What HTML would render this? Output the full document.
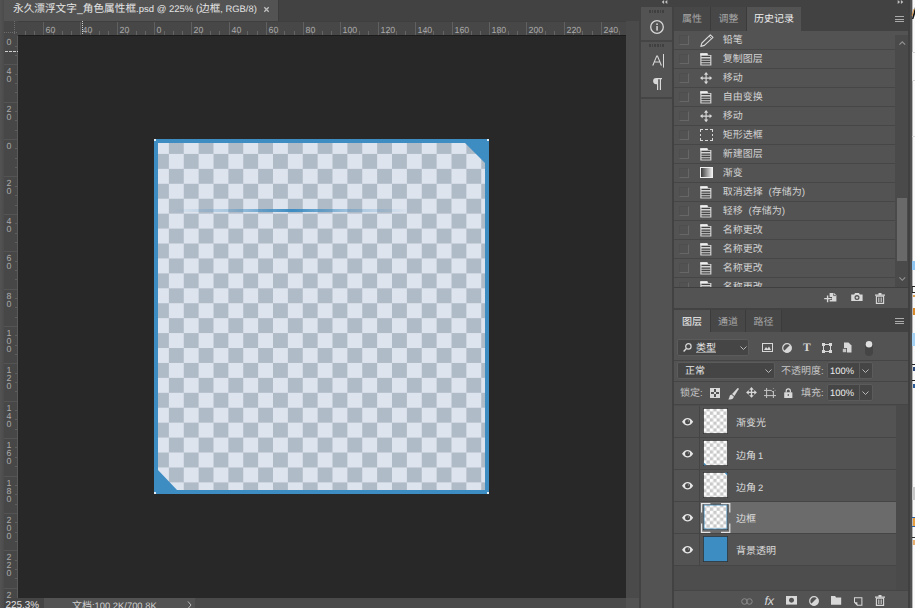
<!DOCTYPE html><html lang="zh-CN"><head><meta charset="utf-8"><title>Photoshop</title><style>
*{box-sizing:border-box;margin:0;padding:0}
html,body{width:915px;height:608px;overflow:hidden;background:#424242}
body{position:relative;text-rendering:geometricPrecision;font-family:"Liberation Sans",sans-serif;font-size:10px;color:#d6d6d6;line-height:1}
.a{position:absolute}
.t{position:absolute;white-space:nowrap;line-height:12px;height:12px;font-size:10px}
.l{font-size:9.4px}
.c{display:inline-block;white-space:nowrap;vertical-align:baseline}
svg{position:absolute;overflow:visible}
.row{position:absolute;left:674px;width:221px;height:19px;border-bottom:1px solid #464646}
.cb{position:absolute;left:5px;top:4px;width:10px;height:10px;background:#525252;border:1px solid #676767;border-top-color:#4e4e4e;border-left-color:#4e4e4e}
  .row .t{left:48.7px;top:4px;color:#d2d2d2}
.lyr{position:absolute;left:674px;width:222px;height:32px;border-bottom:1px solid #454545}
.lyr .eyec{position:absolute;left:0;top:0;width:26px;height:31px;border-right:1px solid #454545;background:#535353}
.lyr .t{left:62px;top:11.5px;color:#dcdcdc}
.th{position:absolute;left:29px;top:3px;width:24px;height:26px;border:1px solid #fff;box-shadow:0 0 0 1px rgba(40,40,40,.4);
 background:repeating-conic-gradient(#ccc 0 25%,#fff 0 50%) 0 0/7px 7px}
.dd{position:absolute;background:#454545;border:1px solid #5b5b5b;border-radius:2px}
.tab{position:absolute;text-align:center;font-size:10px;line-height:12px;color:#a6a6a6;background:#474747;border-right:1px solid #3b3b3b}
.tab.on{background:#535353;color:#f0f0f0;border-right:none}
</style></head><body>
<div class="a" style="left:0;top:0;width:640px;height:21px;background:#424242"></div>
<div class="a" style="left:0;top:0;width:279px;height:21px;background:#535353;border-right:1px solid #3c3c3c"></div>
<div class="a" style="left:0;top:0;width:4px;height:608px;background:linear-gradient(90deg,#535353,#4b4b4b)"></div>
<div class="t" style="left:13px;top:3px;font-size:10.65px;color:#e4e4e4"><span class="c" style="width:63.9px">永久漂浮文字</span>_<span class="c" style="width:53.25px">角色属性框</span><span class="l" style="font-size:9.5px">.psd @ 225% (</span><span class="c" style="width:21.3px">边框</span><span class="l" style="font-size:9.4px">, RGB/8)</span></div>
<svg style="left:264px;top:7px" width="5" height="5" viewBox="0 0 5 5"><path d="M0.3 0.3L4.7 4.7M4.7 0.3L0.3 4.7" stroke="#c0c0c0" stroke-width="1.3"/></svg>
<div class="a" style="left:4px;top:21px;width:622px;height:15px;background:#474747;border-bottom:1px solid #1c1c1c"></div>
<div class="a" style="left:4px;top:36px;width:14px;height:562px;background:#474747;border-right:1px solid #5a5a5a"></div>
<svg style="left:0;top:0" width="915" height="608" shape-rendering="crispEdges"><rect x="25" y="31" width="1" height="4" fill="#646464"/><rect x="34" y="31" width="1" height="4" fill="#646464"/><rect x="43" y="21" width="1" height="14" fill="#606060"/><rect x="53" y="31" width="1" height="4" fill="#646464"/><rect x="62" y="31" width="1" height="4" fill="#646464"/><rect x="71" y="31" width="1" height="4" fill="#646464"/><rect x="80" y="21" width="1" height="14" fill="#606060"/><rect x="90" y="31" width="1" height="4" fill="#646464"/><rect x="99" y="31" width="1" height="4" fill="#646464"/><rect x="108" y="31" width="1" height="4" fill="#646464"/><rect x="117" y="21" width="1" height="14" fill="#606060"/><rect x="127" y="31" width="1" height="4" fill="#646464"/><rect x="136" y="31" width="1" height="4" fill="#646464"/><rect x="145" y="31" width="1" height="4" fill="#646464"/><rect x="154" y="21" width="1" height="14" fill="#606060"/><rect x="164" y="31" width="1" height="4" fill="#646464"/><rect x="173" y="31" width="1" height="4" fill="#646464"/><rect x="182" y="31" width="1" height="4" fill="#646464"/><rect x="191" y="21" width="1" height="14" fill="#606060"/><rect x="201" y="31" width="1" height="4" fill="#646464"/><rect x="210" y="31" width="1" height="4" fill="#646464"/><rect x="219" y="31" width="1" height="4" fill="#646464"/><rect x="229" y="21" width="1" height="14" fill="#606060"/><rect x="238" y="31" width="1" height="4" fill="#646464"/><rect x="247" y="31" width="1" height="4" fill="#646464"/><rect x="257" y="31" width="1" height="4" fill="#646464"/><rect x="266" y="21" width="1" height="14" fill="#606060"/><rect x="275" y="31" width="1" height="4" fill="#646464"/><rect x="284" y="31" width="1" height="4" fill="#646464"/><rect x="294" y="31" width="1" height="4" fill="#646464"/><rect x="303" y="21" width="1" height="14" fill="#606060"/><rect x="312" y="31" width="1" height="4" fill="#646464"/><rect x="322" y="31" width="1" height="4" fill="#646464"/><rect x="331" y="31" width="1" height="4" fill="#646464"/><rect x="340" y="21" width="1" height="14" fill="#606060"/><rect x="350" y="31" width="1" height="4" fill="#646464"/><rect x="359" y="31" width="1" height="4" fill="#646464"/><rect x="368" y="31" width="1" height="4" fill="#646464"/><rect x="378" y="21" width="1" height="14" fill="#606060"/><rect x="387" y="31" width="1" height="4" fill="#646464"/><rect x="396" y="31" width="1" height="4" fill="#646464"/><rect x="405" y="31" width="1" height="4" fill="#646464"/><rect x="415" y="21" width="1" height="14" fill="#606060"/><rect x="424" y="31" width="1" height="4" fill="#646464"/><rect x="433" y="31" width="1" height="4" fill="#646464"/><rect x="443" y="31" width="1" height="4" fill="#646464"/><rect x="452" y="21" width="1" height="14" fill="#606060"/><rect x="461" y="31" width="1" height="4" fill="#646464"/><rect x="471" y="31" width="1" height="4" fill="#646464"/><rect x="480" y="31" width="1" height="4" fill="#646464"/><rect x="489" y="21" width="1" height="14" fill="#606060"/><rect x="498" y="31" width="1" height="4" fill="#646464"/><rect x="508" y="31" width="1" height="4" fill="#646464"/><rect x="517" y="31" width="1" height="4" fill="#646464"/><rect x="526" y="21" width="1" height="14" fill="#606060"/><rect x="536" y="31" width="1" height="4" fill="#646464"/><rect x="545" y="31" width="1" height="4" fill="#646464"/><rect x="554" y="31" width="1" height="4" fill="#646464"/><rect x="564" y="21" width="1" height="14" fill="#606060"/><rect x="573" y="31" width="1" height="4" fill="#646464"/><rect x="582" y="31" width="1" height="4" fill="#646464"/><rect x="592" y="31" width="1" height="4" fill="#646464"/><rect x="601" y="21" width="1" height="14" fill="#606060"/><rect x="610" y="31" width="1" height="4" fill="#646464"/><rect x="619" y="31" width="1" height="4" fill="#646464"/><rect x="15" y="46" width="2" height="1" fill="#5e5e5e"/><rect x="15" y="55" width="2" height="1" fill="#5e5e5e"/><rect x="4" y="64" width="13" height="1" fill="#545454"/><rect x="15" y="74" width="2" height="1" fill="#5e5e5e"/><rect x="15" y="83" width="2" height="1" fill="#5e5e5e"/><rect x="15" y="92" width="2" height="1" fill="#5e5e5e"/><rect x="4" y="102" width="13" height="1" fill="#545454"/><rect x="15" y="111" width="2" height="1" fill="#5e5e5e"/><rect x="15" y="120" width="2" height="1" fill="#5e5e5e"/><rect x="15" y="130" width="2" height="1" fill="#5e5e5e"/><rect x="4" y="139" width="13" height="1" fill="#545454"/><rect x="15" y="148" width="2" height="1" fill="#5e5e5e"/><rect x="15" y="158" width="2" height="1" fill="#5e5e5e"/><rect x="15" y="167" width="2" height="1" fill="#5e5e5e"/><rect x="4" y="176" width="13" height="1" fill="#545454"/><rect x="15" y="186" width="2" height="1" fill="#5e5e5e"/><rect x="15" y="195" width="2" height="1" fill="#5e5e5e"/><rect x="15" y="205" width="2" height="1" fill="#5e5e5e"/><rect x="4" y="214" width="13" height="1" fill="#545454"/><rect x="15" y="223" width="2" height="1" fill="#5e5e5e"/><rect x="15" y="233" width="2" height="1" fill="#5e5e5e"/><rect x="15" y="242" width="2" height="1" fill="#5e5e5e"/><rect x="4" y="251" width="13" height="1" fill="#545454"/><rect x="15" y="261" width="2" height="1" fill="#5e5e5e"/><rect x="15" y="270" width="2" height="1" fill="#5e5e5e"/><rect x="15" y="279" width="2" height="1" fill="#5e5e5e"/><rect x="4" y="289" width="13" height="1" fill="#545454"/><rect x="15" y="298" width="2" height="1" fill="#5e5e5e"/><rect x="15" y="307" width="2" height="1" fill="#5e5e5e"/><rect x="15" y="317" width="2" height="1" fill="#5e5e5e"/><rect x="4" y="326" width="13" height="1" fill="#545454"/><rect x="15" y="335" width="2" height="1" fill="#5e5e5e"/><rect x="15" y="345" width="2" height="1" fill="#5e5e5e"/><rect x="15" y="354" width="2" height="1" fill="#5e5e5e"/><rect x="4" y="363" width="13" height="1" fill="#545454"/><rect x="15" y="373" width="2" height="1" fill="#5e5e5e"/><rect x="15" y="382" width="2" height="1" fill="#5e5e5e"/><rect x="15" y="391" width="2" height="1" fill="#5e5e5e"/><rect x="4" y="401" width="13" height="1" fill="#545454"/><rect x="15" y="410" width="2" height="1" fill="#5e5e5e"/><rect x="15" y="419" width="2" height="1" fill="#5e5e5e"/><rect x="15" y="429" width="2" height="1" fill="#5e5e5e"/><rect x="4" y="438" width="13" height="1" fill="#545454"/><rect x="15" y="447" width="2" height="1" fill="#5e5e5e"/><rect x="15" y="457" width="2" height="1" fill="#5e5e5e"/><rect x="15" y="466" width="2" height="1" fill="#5e5e5e"/><rect x="4" y="476" width="13" height="1" fill="#545454"/><rect x="15" y="485" width="2" height="1" fill="#5e5e5e"/><rect x="15" y="494" width="2" height="1" fill="#5e5e5e"/><rect x="15" y="504" width="2" height="1" fill="#5e5e5e"/><rect x="4" y="513" width="13" height="1" fill="#545454"/><rect x="15" y="522" width="2" height="1" fill="#5e5e5e"/><rect x="15" y="532" width="2" height="1" fill="#5e5e5e"/><rect x="15" y="541" width="2" height="1" fill="#5e5e5e"/><rect x="4" y="550" width="13" height="1" fill="#545454"/><rect x="15" y="560" width="2" height="1" fill="#5e5e5e"/><rect x="15" y="569" width="2" height="1" fill="#5e5e5e"/><rect x="15" y="578" width="2" height="1" fill="#5e5e5e"/><rect x="4" y="588" width="13" height="1" fill="#545454"/></svg>
<div class="t" style="left:45.5px;top:26px;font-size:8.8px;line-height:9px;height:9px;color:#aaa">60</div>
<div class="t" style="left:82.5px;top:26px;font-size:8.8px;line-height:9px;height:9px;color:#aaa">40</div>
<div class="t" style="left:119.5px;top:26px;font-size:8.8px;line-height:9px;height:9px;color:#aaa">20</div>
<div class="t" style="left:156.5px;top:26px;font-size:8.8px;line-height:9px;height:9px;color:#aaa">0</div>
<div class="t" style="left:193.5px;top:26px;font-size:8.8px;line-height:9px;height:9px;color:#aaa">20</div>
<div class="t" style="left:231.5px;top:26px;font-size:8.8px;line-height:9px;height:9px;color:#aaa">40</div>
<div class="t" style="left:268.5px;top:26px;font-size:8.8px;line-height:9px;height:9px;color:#aaa">60</div>
<div class="t" style="left:305.5px;top:26px;font-size:8.8px;line-height:9px;height:9px;color:#aaa">80</div>
<div class="t" style="left:342.5px;top:26px;font-size:8.8px;line-height:9px;height:9px;color:#aaa">100</div>
<div class="t" style="left:380.5px;top:26px;font-size:8.8px;line-height:9px;height:9px;color:#aaa">120</div>
<div class="t" style="left:417.5px;top:26px;font-size:8.8px;line-height:9px;height:9px;color:#aaa">140</div>
<div class="t" style="left:454.5px;top:26px;font-size:8.8px;line-height:9px;height:9px;color:#aaa">160</div>
<div class="t" style="left:491.5px;top:26px;font-size:8.8px;line-height:9px;height:9px;color:#aaa">180</div>
<div class="t" style="left:528.5px;top:26px;font-size:8.8px;line-height:9px;height:9px;color:#aaa">200</div>
<div class="t" style="left:566.5px;top:26px;font-size:8.8px;line-height:9px;height:9px;color:#aaa">220</div>
<div class="t" style="left:603.5px;top:26px;font-size:8.8px;line-height:9px;height:9px;color:#aaa">240</div>
<div class="t" style="left:6.5px;top:38px;font-size:8.8px;line-height:9px;height:9px;color:#aaa">0</div>
<div class="t" style="left:6.5px;top:67px;font-size:8.8px;line-height:9px;height:9px;color:#aaa">4</div>
<div class="t" style="left:6.5px;top:75px;font-size:8.8px;line-height:9px;height:9px;color:#aaa">0</div>
<div class="t" style="left:6.5px;top:105px;font-size:8.8px;line-height:9px;height:9px;color:#aaa">2</div>
<div class="t" style="left:6.5px;top:113px;font-size:8.8px;line-height:9px;height:9px;color:#aaa">0</div>
<div class="t" style="left:6.5px;top:142px;font-size:8.8px;line-height:9px;height:9px;color:#aaa">0</div>
<div class="t" style="left:6.5px;top:179px;font-size:8.8px;line-height:9px;height:9px;color:#aaa">2</div>
<div class="t" style="left:6.5px;top:187px;font-size:8.8px;line-height:9px;height:9px;color:#aaa">0</div>
<div class="t" style="left:6.5px;top:217px;font-size:8.8px;line-height:9px;height:9px;color:#aaa">4</div>
<div class="t" style="left:6.5px;top:225px;font-size:8.8px;line-height:9px;height:9px;color:#aaa">0</div>
<div class="t" style="left:6.5px;top:254px;font-size:8.8px;line-height:9px;height:9px;color:#aaa">6</div>
<div class="t" style="left:6.5px;top:262px;font-size:8.8px;line-height:9px;height:9px;color:#aaa">0</div>
<div class="t" style="left:6.5px;top:292px;font-size:8.8px;line-height:9px;height:9px;color:#aaa">8</div>
<div class="t" style="left:6.5px;top:300px;font-size:8.8px;line-height:9px;height:9px;color:#aaa">0</div>
<div class="t" style="left:6.5px;top:329px;font-size:8.8px;line-height:9px;height:9px;color:#aaa">1</div>
<div class="t" style="left:6.5px;top:337px;font-size:8.8px;line-height:9px;height:9px;color:#aaa">0</div>
<div class="t" style="left:6.5px;top:345px;font-size:8.8px;line-height:9px;height:9px;color:#aaa">0</div>
<div class="t" style="left:6.5px;top:366px;font-size:8.8px;line-height:9px;height:9px;color:#aaa">1</div>
<div class="t" style="left:6.5px;top:374px;font-size:8.8px;line-height:9px;height:9px;color:#aaa">2</div>
<div class="t" style="left:6.5px;top:382px;font-size:8.8px;line-height:9px;height:9px;color:#aaa">0</div>
<div class="t" style="left:6.5px;top:404px;font-size:8.8px;line-height:9px;height:9px;color:#aaa">1</div>
<div class="t" style="left:6.5px;top:412px;font-size:8.8px;line-height:9px;height:9px;color:#aaa">4</div>
<div class="t" style="left:6.5px;top:420px;font-size:8.8px;line-height:9px;height:9px;color:#aaa">0</div>
<div class="t" style="left:6.5px;top:441px;font-size:8.8px;line-height:9px;height:9px;color:#aaa">1</div>
<div class="t" style="left:6.5px;top:449px;font-size:8.8px;line-height:9px;height:9px;color:#aaa">6</div>
<div class="t" style="left:6.5px;top:457px;font-size:8.8px;line-height:9px;height:9px;color:#aaa">0</div>
<div class="t" style="left:6.5px;top:479px;font-size:8.8px;line-height:9px;height:9px;color:#aaa">1</div>
<div class="t" style="left:6.5px;top:487px;font-size:8.8px;line-height:9px;height:9px;color:#aaa">8</div>
<div class="t" style="left:6.5px;top:495px;font-size:8.8px;line-height:9px;height:9px;color:#aaa">0</div>
<div class="t" style="left:6.5px;top:516px;font-size:8.8px;line-height:9px;height:9px;color:#aaa">2</div>
<div class="t" style="left:6.5px;top:524px;font-size:8.8px;line-height:9px;height:9px;color:#aaa">0</div>
<div class="t" style="left:6.5px;top:532px;font-size:8.8px;line-height:9px;height:9px;color:#aaa">0</div>
<div class="t" style="left:6.5px;top:553px;font-size:8.8px;line-height:9px;height:9px;color:#aaa">2</div>
<div class="t" style="left:6.5px;top:561px;font-size:8.8px;line-height:9px;height:9px;color:#aaa">2</div>
<div class="t" style="left:6.5px;top:569px;font-size:8.8px;line-height:9px;height:9px;color:#aaa">0</div>
<div class="t" style="left:6.5px;top:591px;font-size:8.8px;line-height:9px;height:9px;color:#aaa">2</div>
<div class="t" style="left:6.5px;top:599px;font-size:8.8px;line-height:9px;height:9px;color:#aaa">4</div>
<div class="a" style="left:4px;top:21px;width:636px;height:1px;background:#3f3f3f"></div>
<div class="a" style="left:4px;top:21px;width:14px;height:15px;background:#474747"></div>
<div class="a" style="left:82px;top:21px;width:1px;height:14px;background:repeating-linear-gradient(180deg,#cfcfcf 0 1px,transparent 1px 2px)"></div>
<div class="a" style="left:5px;top:51px;width:13px;height:1px;background:repeating-linear-gradient(90deg,#cfcfcf 0 3px,transparent 3px 4px)"></div>
<div class="a" style="left:14px;top:21px;width:1px;height:14px;background:repeating-linear-gradient(180deg,#6c6c6c 0 1px,transparent 1px 2px)"></div>
<div class="a" style="left:4px;top:32px;width:14px;height:1px;background:repeating-linear-gradient(90deg,#6c6c6c 0 1px,transparent 1px 2px)"></div>
<div class="a" style="left:18px;top:36px;width:608px;height:562px;background:#282828"></div>
<div class="a" style="left:154px;top:139px;width:335px;height:355px;background:repeating-conic-gradient(#b0bbc8 0 25%,#dee4ee 0 50%) 0 0/29.76px 29.86px"></div>
<div class="a" style="left:172px;top:209px;width:240px;height:3px;background:linear-gradient(90deg,rgba(61,140,194,0),rgba(61,140,194,.35) 25%,rgba(61,140,194,1) 50%,rgba(61,140,194,.35) 75%,rgba(61,140,194,0))"></div>
<svg style="left:154px;top:139px" width="335" height="355" viewBox="0 0 335 355"><path fill="#3d8cc2" fill-rule="evenodd" d="M0 0H335V355H0ZM4 4V331L23 351H331V24L311 4Z"/><rect x="0" y="0" width="2" height="2" fill="#fff" opacity=".85"/><rect x="333" y="0" width="2" height="2" fill="#fff" opacity=".85"/><rect x="0" y="353" width="2" height="2" fill="#fff" opacity=".85"/><rect x="333" y="353" width="2" height="2" fill="#fff" opacity=".85"/></svg>
<div class="a" style="left:626px;top:21px;width:13px;height:587px;background:#4a4a4a"></div>
<div class="a" style="left:4px;top:598px;width:622px;height:10px;background:#4a4a4a"></div>
<div class="a" style="left:626px;top:598px;width:13px;height:10px;background:#535353"></div>
<div class="a" style="left:4px;top:598px;width:40px;height:10px;background:#454545"></div>
<div class="a" style="left:44px;top:598px;width:151px;height:10px;background:#535353"></div>
<div class="t l" style="left:5.5px;top:599.5px;color:#e0e0e0;font-size:9.9px">225.3%</div>
<div class="t" style="left:72px;top:599.5px;color:#d0d0d0"><span class="c" style="width:20px">文档</span><span class="l">:100.2K/700.8K</span></div>
<svg style="left:187px;top:601px" width="5" height="8" viewBox="0 0 5 8"><path d="M1 0.5L4 4L1 7.5" fill="none" stroke="#bbb" stroke-width="1"/></svg>
<div class="a" style="left:639px;top:0;width:276px;height:608px;background:#424242"></div>
<div class="a" style="left:641px;top:0;width:269px;height:7px;background:#424242"></div>
<svg style="left:661px;top:0px" width="7" height="4" viewBox="0 0 7 5"><path d="M3 0V5L0 2.5ZM7 0V5L4 2.5Z" fill="#c0c0c0"/></svg>
<svg style="left:897px;top:0px" width="7" height="4" viewBox="0 0 7 5"><path d="M0 0V5L3 2.5ZM4 0V5L7 2.5Z" fill="#c0c0c0"/></svg>
<div class="a" style="left:641px;top:7px;width:31px;height:601px;background:#535353"></div>
<div class="a" style="left:641px;top:40px;width:31px;height:2px;background:#454545"></div>
<div class="a" style="left:641px;top:97px;width:31px;height:2px;background:#454545"></div>
<div class="a" style="left:649px;top:10px;width:16px;height:3px;background:repeating-linear-gradient(90deg,#404040 0 1.6px,transparent 1.6px 2.67px)"></div>
<div class="a" style="left:649px;top:44px;width:16px;height:3px;background:repeating-linear-gradient(90deg,#404040 0 1.6px,transparent 1.6px 2.67px)"></div>
<svg style="left:650px;top:20px" width="14" height="14" viewBox="0 0 14 14"><circle cx="7" cy="7" r="6.3" fill="none" stroke="#d8d8d8" stroke-width="1.3"/><rect x="6.3" y="6" width="1.5" height="4.6" fill="#d8d8d8"/><rect x="6.3" y="3.4" width="1.5" height="1.6" fill="#d8d8d8"/></svg>
<svg style="left:652px;top:54px" width="12" height="14" viewBox="0 0 12 14"><path d="M0.2 11.4L4.4 1.4H5.8L10 11.4H8.7L7.6 8.6H2.6L1.5 11.4ZM3 7.6H7.2L5.1 2.4Z" fill="#d8d8d8"/><rect x="11" y="0" width="1" height="13.6" fill="#d8d8d8"/></svg>
<svg style="left:652px;top:78px" width="10" height="12" viewBox="0 0 10 12"><path d="M4.2 0H10V1.2H9V12H7.8V1.2H6.2V12H5V6.2H4.2A3.1 3.1 0 0 1 4.2 0Z" fill="#d8d8d8"/></svg>
<div class="a" style="left:674px;top:7px;width:235px;height:301px;background:#535353"></div>
<div class="a" style="left:674px;top:7px;width:235px;height:24px;background:#424242"></div>
<div class="tab" style="left:674px;top:7px;width:37px;height:24px;padding-top:7px">属性</div>
<div class="tab" style="left:711px;top:7px;width:36px;height:24px;padding-top:7px">调整</div>
<div class="tab on" style="left:747px;top:7px;width:54px;height:24px;padding-top:7px">历史记录</div>
<svg style="left:895px;top:16px" width="9" height="6" viewBox="0 0 9 6" shape-rendering="crispEdges"><path d="M0 0H9V1H0ZM0 2.5H9V3.5H0ZM0 5H9V6H0Z" fill="#ababab"/></svg>
<div class="a" style="left:0;top:31px;width:915px;height:256px;overflow:hidden">
<div class="row" style="top:0px"><div class="cb"></div><svg style="left:26px;top:3px" width="14" height="13" viewBox="0 0 14 13"><path d="M10.3 0.8L13 3.3L4.4 11.4L0.8 12.4L1.9 9Z" fill="none" stroke="#d8d8d8" stroke-width="1.1" stroke-linejoin="round"/><path d="M9 2.2L11.6 4.7" stroke="#d8d8d8" stroke-width=".9"/></svg><div class="t">铅笔</div></div>
<div class="row" style="top:19px"><div class="cb"></div><svg style="left:26.3px;top:3px" width="12" height="13" viewBox="0 0 12 13"><path d="M0.3 0.3H7.4L8.4 2H11.4V12.6H0.3Z" fill="#d4d4d4"/><rect x="0.3" y="0.3" width="7" height="2.2" fill="#f0f0f0"/><rect x="1.4" y="6.6" width="9" height="1.8" fill="#a4a4a4"/><path d="M1.5 3.4H10.2M1.5 6.1H10.2M1.5 8.7H10.2M1.5 10.9H10.2" stroke="#444" stroke-width="1.25"/></svg><div class="t">复制图层</div></div>
<div class="row" style="top:38px"><div class="cb"></div><svg style="left:26px;top:3.2px" width="12.2" height="12.2" viewBox="0 0 13 13"><path d="M6.5 0L8.8 2.8H7.1V5.9H10.2V4.2L13 6.5L10.2 8.8V7.1H7.1V10.2H8.8L6.5 13L4.2 10.2H5.9V7.1H2.8V8.8L0 6.5L2.8 4.2V5.9H5.9V2.8H4.2Z" fill="#d8d8d8"/></svg><div class="t">移动</div></div>
<div class="row" style="top:57px"><div class="cb"></div><svg style="left:26.3px;top:3px" width="12" height="13" viewBox="0 0 12 13"><path d="M0.3 0.3H7.4L8.4 2H11.4V12.6H0.3Z" fill="#d4d4d4"/><rect x="0.3" y="0.3" width="7" height="2.2" fill="#f0f0f0"/><rect x="1.4" y="6.6" width="9" height="1.8" fill="#a4a4a4"/><path d="M1.5 3.4H10.2M1.5 6.1H10.2M1.5 8.7H10.2M1.5 10.9H10.2" stroke="#444" stroke-width="1.25"/></svg><div class="t">自由变换</div></div>
<div class="row" style="top:76px"><div class="cb"></div><svg style="left:26px;top:3.2px" width="12.2" height="12.2" viewBox="0 0 13 13"><path d="M6.5 0L8.8 2.8H7.1V5.9H10.2V4.2L13 6.5L10.2 8.8V7.1H7.1V10.2H8.8L6.5 13L4.2 10.2H5.9V7.1H2.8V8.8L0 6.5L2.8 4.2V5.9H5.9V2.8H4.2Z" fill="#d8d8d8"/></svg><div class="t">移动</div></div>
<div class="row" style="top:95px"><div class="cb"></div><svg style="left:26px;top:3px" width="13" height="12" viewBox="0 0 13 12" shape-rendering="crispEdges"><path d="M0.5 3V0.5H3M5 0.5H8M10 0.5H12.5V3M12.5 5V7M12.5 9V11.5H10M8 11.5H5M3 11.5H0.5V9M0.5 7V5" fill="none" stroke="#d8d8d8" stroke-width="1"/></svg><div class="t">矩形选框</div></div>
<div class="row" style="top:114px"><div class="cb"></div><svg style="left:26.3px;top:3px" width="12" height="13" viewBox="0 0 12 13"><path d="M0.3 0.3H7.4L8.4 2H11.4V12.6H0.3Z" fill="#d4d4d4"/><rect x="0.3" y="0.3" width="7" height="2.2" fill="#f0f0f0"/><rect x="1.4" y="6.6" width="9" height="1.8" fill="#a4a4a4"/><path d="M1.5 3.4H10.2M1.5 6.1H10.2M1.5 8.7H10.2M1.5 10.9H10.2" stroke="#444" stroke-width="1.25"/></svg><div class="t">新建图层</div></div>
<div class="row" style="top:133px"><div class="cb"></div><svg style="left:26px;top:3px" width="13" height="11" viewBox="0 0 13 11"><defs><linearGradient id="gg"><stop offset="0" stop-color="#333"/><stop offset="1" stop-color="#f4f4f4"/></linearGradient></defs><rect x=".5" y=".5" width="12" height="10" fill="url(#gg)" stroke="#f0f0f0"/></svg><div class="t">渐变</div></div>
<div class="row" style="top:152px"><div class="cb"></div><svg style="left:26.3px;top:3px" width="12" height="13" viewBox="0 0 12 13"><path d="M0.3 0.3H7.4L8.4 2H11.4V12.6H0.3Z" fill="#d4d4d4"/><rect x="0.3" y="0.3" width="7" height="2.2" fill="#f0f0f0"/><rect x="1.4" y="6.6" width="9" height="1.8" fill="#a4a4a4"/><path d="M1.5 3.4H10.2M1.5 6.1H10.2M1.5 8.7H10.2M1.5 10.9H10.2" stroke="#444" stroke-width="1.25"/></svg><div class="t"><span class="c" style="width:40px">取消选择</span> <span style="margin:0 0 0 3px">(</span><span class="c" style="width:30px">存储为</span><span>)</span></div></div>
<div class="row" style="top:171px"><div class="cb"></div><svg style="left:26.3px;top:3px" width="12" height="13" viewBox="0 0 12 13"><path d="M0.3 0.3H7.4L8.4 2H11.4V12.6H0.3Z" fill="#d4d4d4"/><rect x="0.3" y="0.3" width="7" height="2.2" fill="#f0f0f0"/><rect x="1.4" y="6.6" width="9" height="1.8" fill="#a4a4a4"/><path d="M1.5 3.4H10.2M1.5 6.1H10.2M1.5 8.7H10.2M1.5 10.9H10.2" stroke="#444" stroke-width="1.25"/></svg><div class="t"><span class="c" style="width:20px">轻移</span> <span style="margin:0 0 0 3px">(</span><span class="c" style="width:30px">存储为</span><span>)</span></div></div>
<div class="row" style="top:190px"><div class="cb"></div><svg style="left:26.3px;top:3px" width="12" height="13" viewBox="0 0 12 13"><path d="M0.3 0.3H7.4L8.4 2H11.4V12.6H0.3Z" fill="#d4d4d4"/><rect x="0.3" y="0.3" width="7" height="2.2" fill="#f0f0f0"/><rect x="1.4" y="6.6" width="9" height="1.8" fill="#a4a4a4"/><path d="M1.5 3.4H10.2M1.5 6.1H10.2M1.5 8.7H10.2M1.5 10.9H10.2" stroke="#444" stroke-width="1.25"/></svg><div class="t">名称更改</div></div>
<div class="row" style="top:209px"><div class="cb"></div><svg style="left:26.3px;top:3px" width="12" height="13" viewBox="0 0 12 13"><path d="M0.3 0.3H7.4L8.4 2H11.4V12.6H0.3Z" fill="#d4d4d4"/><rect x="0.3" y="0.3" width="7" height="2.2" fill="#f0f0f0"/><rect x="1.4" y="6.6" width="9" height="1.8" fill="#a4a4a4"/><path d="M1.5 3.4H10.2M1.5 6.1H10.2M1.5 8.7H10.2M1.5 10.9H10.2" stroke="#444" stroke-width="1.25"/></svg><div class="t">名称更改</div></div>
<div class="row" style="top:228px"><div class="cb"></div><svg style="left:26.3px;top:3px" width="12" height="13" viewBox="0 0 12 13"><path d="M0.3 0.3H7.4L8.4 2H11.4V12.6H0.3Z" fill="#d4d4d4"/><rect x="0.3" y="0.3" width="7" height="2.2" fill="#f0f0f0"/><rect x="1.4" y="6.6" width="9" height="1.8" fill="#a4a4a4"/><path d="M1.5 3.4H10.2M1.5 6.1H10.2M1.5 8.7H10.2M1.5 10.9H10.2" stroke="#444" stroke-width="1.25"/></svg><div class="t">名称更改</div></div>
<div class="row" style="top:247px"><div class="cb"></div><svg style="left:26.3px;top:3px" width="12" height="13" viewBox="0 0 12 13"><path d="M0.3 0.3H7.4L8.4 2H11.4V12.6H0.3Z" fill="#d4d4d4"/><rect x="0.3" y="0.3" width="7" height="2.2" fill="#f0f0f0"/><rect x="1.4" y="6.6" width="9" height="1.8" fill="#a4a4a4"/><path d="M1.5 3.4H10.2M1.5 6.1H10.2M1.5 8.7H10.2M1.5 10.9H10.2" stroke="#444" stroke-width="1.25"/></svg><div class="t">名称更改</div></div>
</div>
<div class="a" style="left:895px;top:35px;width:13px;height:252px;background:#4a4a4a"></div>
<div class="a" style="left:897px;top:198px;width:10px;height:63px;background:#696969"></div>
<svg style="left:898.8px;top:40.6px" width="6.6" height="4.2" viewBox="0 0 8 5"><path d="M0.5 4.5L4 1L7.5 4.5" fill="none" stroke="#949494" stroke-width="1.3"/></svg>
<svg style="left:898.8px;top:277px" width="6.6" height="4.2" viewBox="0 0 8 5"><path d="M0.5 0.5L4 4L7.5 0.5" fill="none" stroke="#949494" stroke-width="1.3"/></svg>
<div class="a" style="left:674px;top:287px;width:235px;height:1px;background:#3f3f3f"></div>
<svg style="left:824px;top:293px" width="13" height="10" viewBox="0 0 13 10"><path d="M5.6 0H10L12.4 2.2V8.6H5.6Z" fill="#d8d8d8"/><path d="M9.6 0.4V2.6H12" fill="none" stroke="#535353" stroke-width=".8"/><path d="M0.2 5.6H8M3.6 2.2V9.4" stroke="#535353" stroke-width="3"/><path d="M0.2 5.6H7.6M3.6 2.4V9.2" stroke="#d8d8d8" stroke-width="1.4"/></svg>
<svg style="left:851px;top:293px" width="12" height="8" viewBox="0 0 12 8"><path d="M0.2 1.4H3.2L4 0H8L8.8 1.4H11.6V8H0.2Z" fill="#d8d8d8"/><circle cx="6" cy="4.6" r="2.5" fill="#535353"/><circle cx="6" cy="4.6" r="1.2" fill="#d8d8d8"/></svg>
<svg style="left:875px;top:293px" width="10" height="11" viewBox="0 0 10 11"><path d="M0 1.6H10V2.8H0ZM3.5 0H6.5V1.6H3.5Z" fill="#d8d8d8"/><path d="M1.4 3.2H8.6V10.4H1.4Z" fill="none" stroke="#d8d8d8" stroke-width="1.1"/><path d="M3.8 4.5V9M6.2 4.5V9" stroke="#d8d8d8" stroke-width="1"/></svg>
<div class="a" style="left:674px;top:310px;width:235px;height:298px;background:#535353"></div>
<div class="a" style="left:674px;top:310px;width:235px;height:22px;background:#424242"></div>
<div class="tab on" style="left:674px;top:310px;width:36px;height:23px;padding-top:7px">图层</div>
<div class="tab" style="left:710px;top:310px;width:36px;height:22px;padding-top:7px;border-left:1px solid #3b3b3b">通道</div>
<div class="tab" style="left:746px;top:310px;width:36px;height:22px;padding-top:7px">路径</div>
<svg style="left:895px;top:318px" width="9" height="6" viewBox="0 0 9 6" shape-rendering="crispEdges"><path d="M0 0H9V1H0ZM0 2.5H9V3.5H0ZM0 5H9V6H0Z" fill="#ababab"/></svg>
<div class="dd" style="left:677px;top:339px;width:72px;height:17px"></div>
<svg style="left:683px;top:343px" width="9" height="9" viewBox="0 0 9 9"><circle cx="5.4" cy="3.4" r="2.7" fill="none" stroke="#d8d8d8" stroke-width="1.2"/><path d="M3.4 5.4L0.6 8.4" stroke="#d8d8d8" stroke-width="1.5"/></svg>
<div class="t" style="left:696px;top:343px;color:#e6e6e6;text-decoration:underline;text-decoration-color:#9a9a9a">类型</div>
<svg style="left:740px;top:346px" width="7" height="4" viewBox="0 0 7 4"><path d="M0.5 0.5L3.5 3.5L6.5 0.5" fill="none" stroke="#b8b8b8" stroke-width="1"/></svg>
<svg style="left:762px;top:343px" width="11" height="9" viewBox="0 0 11 9"><rect x=".5" y=".5" width="10" height="8" fill="none" stroke="#d8d8d8"/><path d="M2 7L4 4L5.5 5.8L7 3.5L9 7Z" fill="#d8d8d8"/></svg>
<svg style="left:782px;top:343px" width="10" height="10" viewBox="0 0 10 10"><circle cx="5" cy="5" r="4.3" fill="none" stroke="#d8d8d8" stroke-width="1.2"/><path d="M8.2 1.8A4.5 4.5 0 0 1 1.8 8.2Z" fill="#d8d8d8"/></svg>
<div class="t" style="left:803px;top:341px;font-family:'Liberation Serif',serif;font-weight:bold;font-size:11.6px;line-height:13px;height:13px;color:#d8d8d8">T</div>
<svg style="left:822px;top:343px" width="10" height="10" viewBox="0 0 10 10"><rect x="1.5" y="1.5" width="7" height="7" fill="none" stroke="#d8d8d8" stroke-width="1"/><path d="M0 0H3V3H0ZM7 0H10V3H7ZM0 7H3V10H0ZM7 7H10V10H7Z" fill="#d8d8d8"/></svg>
<svg style="left:842px;top:342px" width="10" height="11" viewBox="0 0 10 11"><path d="M2 0.5H6.5L9.5 3.5V10.5H2Z" fill="#d8d8d8"/><rect x="0" y="6" width="5" height="5" fill="#535353"/><rect x=".8" y="6.8" width="3.4" height="3.4" fill="#d8d8d8" opacity=".85"/></svg>
<div class="a" style="left:865px;top:341px;width:8px;height:15px;border-radius:4px;background:#454545"></div>
<svg style="left:865px;top:340px" width="8" height="8"><circle cx="4" cy="4.2" r="3.3" fill="#e0e0e0"/></svg>
<div class="a" style="left:674px;top:360px;width:235px;height:1px;background:#454545"></div>
<div class="dd" style="left:677px;top:362px;width:98px;height:17px"></div>
<div class="t" style="left:685px;top:366px;color:#e6e6e6">正常</div>
<svg style="left:765px;top:369px" width="7" height="4" viewBox="0 0 7 4"><path d="M0.5 0.5L3.5 3.5L6.5 0.5" fill="none" stroke="#b8b8b8" stroke-width="1"/></svg>
<div class="t" style="left:781px;top:365px;color:#c4c4c4"><span class="c" style="width:40px">不透明度</span><span class="l">:</span></div>
<div class="dd" style="left:827px;top:362px;width:33px;height:17px;border-radius:2px 0 0 2px"></div>
<div class="dd" style="left:859px;top:362px;width:14px;height:17px;border-radius:0 2px 2px 0"></div>
<div class="t l" style="left:830px;top:365px;color:#ececec">100%</div>
<svg style="left:862px;top:369px" width="7" height="4" viewBox="0 0 7 4"><path d="M0.5 0.5L3.5 3.5L6.5 0.5" fill="none" stroke="#b8b8b8" stroke-width="1"/></svg>
<div class="a" style="left:674px;top:381px;width:235px;height:1px;background:#454545"></div>
<div class="t" style="left:680px;top:387px;color:#c4c4c4"><span class="c" style="width:20px">锁定</span><span class="l">:</span></div>
<svg style="left:710px;top:388px" width="10" height="10" viewBox="0 0 10 10" shape-rendering="crispEdges"><rect x=".5" y=".5" width="9" height="9" fill="none" stroke="#d8d8d8"/><path d="M1 1H4V4H1ZM6 1H9V4H6ZM4 4H6V6H4ZM1 6H4V9H1ZM6 6H9V9H6Z" fill="#d8d8d8"/></svg>
<svg style="left:728.2px;top:387.6px" width="11" height="11.6" viewBox="0 0 11 12"><path d="M9.6 0.2C10.4 -0.2 11.2 0.6 10.8 1.4L6.4 8.2L4 6.2Z" fill="#d8d8d8"/><path d="M3.2 6.6L5.8 8.8C5.8 11.4 3 12.2 0 11.6C1.4 10.6 1.2 9 1.7 8C2.1 7.1 2.7 6.8 3.2 6.6Z" fill="#d8d8d8"/></svg>
<svg style="left:746px;top:387.3px" width="11" height="10.8" viewBox="0 0 13 13"><path d="M6.5 0L9.3 3.2H7.3V5.7H9.8V3.7L13 6.5L9.8 9.3V7.3H7.3V9.8H9.3L6.5 13L3.7 9.8H5.7V7.3H3.2V9.3L0 6.5L3.2 3.7V5.7H5.7V3.2H3.7Z" fill="#d8d8d8"/></svg>
<svg style="left:764px;top:387.8px" width="12" height="10" viewBox="0 0 12 10"><path d="M2.6 0V10M9.4 3V10M0 2.4H7.5M0 7.6H12" fill="none" stroke="#c6c6c6" stroke-width="1"/><path d="M7.2 2.4L9.4 4.6" stroke="#c6c6c6" stroke-width="1"/><path d="M9.4 0V1.6M10.6 2.4H12" stroke="#9a9a9a" stroke-width="1" stroke-dasharray="1 .6"/></svg>
<svg style="left:784px;top:388px" width="8.6" height="10" viewBox="0 0 9 11"><path d="M2.2 5V3.2A2.3 2.3 0 0 1 6.8 3.2V5" fill="none" stroke="#d8d8d8" stroke-width="1.3"/><rect x="0" y="4.6" width="9" height="6.4" rx=".6" fill="#d8d8d8"/><rect x="3.8" y="6.8" width="1.4" height="1.8" fill="#535353"/></svg>
<div class="t" style="left:801px;top:387px;color:#c4c4c4"><span class="c" style="width:20px">填充</span><span class="l">:</span></div>
<div class="dd" style="left:827px;top:384px;width:33px;height:17px;border-radius:2px 0 0 2px"></div>
<div class="dd" style="left:859px;top:384px;width:14px;height:17px;border-radius:0 2px 2px 0"></div>
<div class="t l" style="left:830px;top:387px;color:#ececec">100%</div>
<svg style="left:862px;top:391px" width="7" height="4" viewBox="0 0 7 4"><path d="M0.5 0.5L3.5 3.5L6.5 0.5" fill="none" stroke="#b8b8b8" stroke-width="1"/></svg>
<div class="a" style="left:674px;top:404px;width:235px;height:186px;background:#4d4d4d;border-top:1px solid #454545"></div>
<div class="a" style="left:896px;top:405px;width:12px;height:185px;background:#4a4a4a"></div>
<svg width="0" height="0" style="left:0;top:0"><defs><pattern id="ck" width="6.8" height="6.8" patternUnits="userSpaceOnUse"><rect width="6.8" height="6.8" fill="#fff"/><rect x="3.4" width="3.4" height="3.4" fill="#c9c9c9"/><rect y="3.4" width="3.4" height="3.4" fill="#c9c9c9"/></pattern></defs></svg>
<div class="lyr" style="top:406px;background:#535353"><div class="eyec"><svg style="left:7.6px;top:11.6px" width="11.2" height="7.6" viewBox="0 0 12 8"><path d="M0 4C2 1.1 4 0 6 0S10 1.1 12 4C10 6.9 8 8 6 8S2 6.9 0 4Z" fill="#e6e6e6"/><circle cx="6" cy="4" r="2.7" fill="#4a4a4a"/><circle cx="6.9" cy="3.1" r=".8" fill="#9a9a9a"/></svg></div><svg style="left:28.6px;top:2px" width="25" height="26" viewBox="0 0 25 26"><rect width="25" height="26" fill="#2b2b2b" opacity=".85"/><rect x="0.8" y="0.8" width="23.4" height="24.4" fill="url(#ck)"/></svg><div class="t">渐变光</div></div>
<div class="lyr" style="top:438px;background:#535353"><div class="eyec"><svg style="left:7.6px;top:11.6px" width="11.2" height="7.6" viewBox="0 0 12 8"><path d="M0 4C2 1.1 4 0 6 0S10 1.1 12 4C10 6.9 8 8 6 8S2 6.9 0 4Z" fill="#e6e6e6"/><circle cx="6" cy="4" r="2.7" fill="#4a4a4a"/><circle cx="6.9" cy="3.1" r=".8" fill="#9a9a9a"/></svg></div><svg style="left:28.6px;top:2px" width="25" height="26" viewBox="0 0 25 26"><rect width="25" height="26" fill="#2b2b2b" opacity=".85"/><rect x="0.8" y="0.8" width="23.4" height="24.4" fill="url(#ck)"/><path d="M0.8 22.5L3.4 25.2H0.8Z" fill="#3d8cc2"/></svg><div class="t"><span class="c" style="width:20px">边角</span><span class="l" style="margin-left:2px">1</span></div></div>
<div class="lyr" style="top:470px;background:#535353"><div class="eyec"><svg style="left:7.6px;top:11.6px" width="11.2" height="7.6" viewBox="0 0 12 8"><path d="M0 4C2 1.1 4 0 6 0S10 1.1 12 4C10 6.9 8 8 6 8S2 6.9 0 4Z" fill="#e6e6e6"/><circle cx="6" cy="4" r="2.7" fill="#4a4a4a"/><circle cx="6.9" cy="3.1" r=".8" fill="#9a9a9a"/></svg></div><svg style="left:28.6px;top:2px" width="25" height="26" viewBox="0 0 25 26"><rect width="25" height="26" fill="#2b2b2b" opacity=".85"/><rect x="0.8" y="0.8" width="23.4" height="24.4" fill="url(#ck)"/><path d="M21.6 0.8H24.2V3.4Z" fill="#3d8cc2"/></svg><div class="t"><span class="c" style="width:20px">边角</span><span class="l" style="margin-left:2px">2</span></div></div>
<div class="lyr" style="top:502px;background:#6b6b6b"><div class="eyec"><svg style="left:7.6px;top:11.6px" width="11.2" height="7.6" viewBox="0 0 12 8"><path d="M0 4C2 1.1 4 0 6 0S10 1.1 12 4C10 6.9 8 8 6 8S2 6.9 0 4Z" fill="#e6e6e6"/><circle cx="6" cy="4" r="2.7" fill="#4a4a4a"/><circle cx="6.9" cy="3.1" r=".8" fill="#9a9a9a"/></svg></div><svg style="left:28.6px;top:2px" width="25" height="26" viewBox="0 0 25 26"><rect width="25" height="26" fill="#2b2b2b" opacity=".85"/><rect x="0.8" y="0.8" width="23.4" height="24.4" fill="url(#ck)"/><rect x="1.1" y="1.1" width="22.8" height="23.8" fill="none" stroke="#3d8cc2" stroke-width=".7"/></svg><svg style="left:26.6px;top:1px" width="29.4" height="30" viewBox="0 0 29.4 30"><path d="M0.6 9.5V0.6H9.4M20 0.6H28.8V9.5M28.8 20.5V29.4H20M9.4 29.4H0.6V20.5" fill="none" stroke="#e4e4e4" stroke-width="1.2"/></svg><div class="t">边框</div></div>
<div class="lyr" style="top:534px;background:#535353"><div class="eyec"><svg style="left:7.6px;top:11.6px" width="11.2" height="7.6" viewBox="0 0 12 8"><path d="M0 4C2 1.1 4 0 6 0S10 1.1 12 4C10 6.9 8 8 6 8S2 6.9 0 4Z" fill="#e6e6e6"/><circle cx="6" cy="4" r="2.7" fill="#4a4a4a"/><circle cx="6.9" cy="3.1" r=".8" fill="#9a9a9a"/></svg></div><svg style="left:28.6px;top:2px" width="25" height="26" viewBox="0 0 25 26"><rect width="25" height="26" fill="#2b2b2b" opacity=".85"/><rect x="0.8" y="0.8" width="23.4" height="24.4" fill="#3d8cc2"/></svg><div class="t">背景透明</div></div>
<div class="a" style="left:674px;top:590px;width:235px;height:18px;background:#535353;border-top:1px solid #454545"></div>
<svg style="left:741px;top:597.6px" width="12" height="7" viewBox="0 0 12 7"><circle cx="3.5" cy="3.5" r="2.8" fill="none" stroke="#8c8c8c" stroke-width="1"/><circle cx="8.4" cy="3.5" r="2.8" fill="none" stroke="#8c8c8c" stroke-width="1"/></svg>
<div class="t" style="left:764.5px;top:595px;font-style:italic;font-size:12.5px;line-height:13px;height:13px;color:#d8d8d8;letter-spacing:-.3px">fx</div>
<svg style="left:785.6px;top:596.2px" width="11" height="8.6" viewBox="0 0 11 8.6"><rect width="11" height="8.6" fill="#d8d8d8"/><circle cx="5.5" cy="4.3" r="2.5" fill="#535353"/></svg>
<svg style="left:809px;top:596px" width="10" height="10" viewBox="0 0 10 10"><circle cx="5" cy="5" r="4.3" fill="none" stroke="#d8d8d8" stroke-width="1.2"/><path d="M8.2 1.8A4.5 4.5 0 0 1 1.8 8.2Z" fill="#d8d8d8"/></svg>
<svg style="left:831.3px;top:596px" width="10.2" height="8.8" viewBox="0 0 10.2 8.8"><path d="M0 0H4.2L5 1.6H10.2V8.8H0Z" fill="#d8d8d8"/></svg>
<svg style="left:854px;top:596.8px" width="8.4" height="9" viewBox="0 0 10 10"><path d="M0.6 0.6H9.4V9.4H4L0.6 6Z" fill="none" stroke="#d8d8d8" stroke-width="1.2"/><path d="M0.6 6H4V9.4Z" fill="#d8d8d8"/></svg>
<svg style="left:875px;top:595px" width="10" height="11" viewBox="0 0 10 11"><path d="M0 1.6H10V2.8H0ZM3.5 0H6.5V1.6H3.5Z" fill="#d8d8d8"/><path d="M1.4 3.2H8.6V10.4H1.4Z" fill="none" stroke="#d8d8d8" stroke-width="1.1"/><path d="M3.8 4.5V9M6.2 4.5V9" stroke="#d8d8d8" stroke-width="1"/></svg>
<div class="a" style="left:908px;top:0;width:2px;height:608px;background:#404040"></div>
<div class="a" style="left:910px;top:0;width:2px;height:608px;background:#4f4f4f"></div>
<div class="a" style="left:912px;top:0;width:3px;height:608px;background:linear-gradient(90deg,#b8b8b8 0 0.5px,#fafafa 1px)"></div>
<svg style="left:912px;top:7px" width="3" height="12" viewBox="0 0 3 12"><path d="M0 12L3 0V7L1.4 12Z" fill="#111"/><path d="M0 9L2 2" stroke="#d88a2a" stroke-width=".8"/></svg>
<div class="a" style="left:912px;top:52px;width:3px;height:1px;background:#d4d4d4"></div>
<div class="a" style="left:912px;top:80px;width:3px;height:1px;background:#d4d4d4"></div>
<div class="a" style="left:912px;top:52px;width:1px;height:28px;background:#dcdcdc"></div>
<div class="a" style="left:912px;top:136px;width:3px;height:1px;background:#d8d8d8"></div>
<div class="a" style="left:912px;top:261px;width:3px;height:9px;background:#8ec5f1"></div>
<div class="a" style="left:912px;top:286px;width:3px;height:1px;background:#222"></div>
<div class="a" style="left:912px;top:287px;width:1px;height:5px;background:#555"></div>
<div class="a" style="left:912px;top:292px;width:3px;height:1px;background:#222"></div>
<div class="a" style="left:913px;top:295px;width:2px;height:2px;background:#e0a050"></div>
<div class="a" style="left:913px;top:308px;width:2px;height:7px;background:#d98a2b"></div>
<div class="a" style="left:912px;top:333px;width:3px;height:13px;background:#a6d2f4"></div>
<div class="a" style="left:912px;top:364px;width:3px;height:1px;background:#222"></div>
<div class="a" style="left:913px;top:367px;width:2px;height:4px;background:#2c4a7a"></div>
<div class="a" style="left:912px;top:380px;width:3px;height:1px;background:#222"></div>
<div class="a" style="left:913px;top:384px;width:2px;height:4px;background:#2c5c9a"></div>
<div class="a" style="left:912px;top:487px;width:3px;height:13px;background:#c8c8c8"></div>
<div class="a" style="left:912px;top:517px;width:3px;height:1px;background:#2a5ea8"></div>
<div class="a" style="left:912px;top:526px;width:3px;height:1px;background:#2a5ea8"></div>
<div class="a" style="left:913px;top:518px;width:2px;height:8px;background:#e8a040"></div>
<div class="a" style="left:912px;top:537px;width:3px;height:1px;background:#333"></div>
<div class="a" style="left:913px;top:540px;width:2px;height:5px;background:#e8b070"></div>
</body></html>
